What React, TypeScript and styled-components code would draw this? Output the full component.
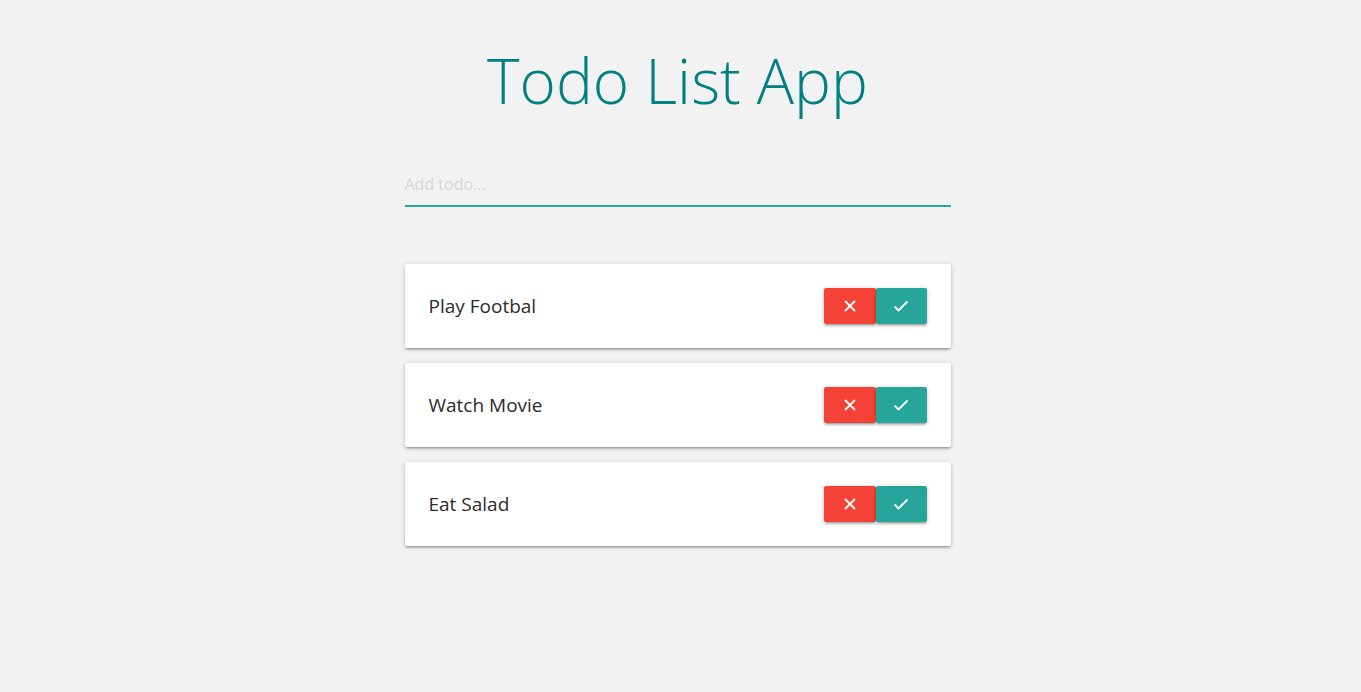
import React from 'react'
import styled, { createGlobalStyle } from 'styled-components'

const GlobalStyle = createGlobalStyle`
  body {
    margin: 0;
    min-height: 100vh;
    background: #f2f2f2;
    font-family: 'Open Sans', 'Noto Sans', sans-serif;
  }
`

const Shell = styled.div`
  padding: 38px 6px 60px 0;
`
const Page = styled.main`
  width: 546px;
  margin: 0 auto;
  display: flex;
  flex-direction: column;
`
const Title = styled.h1`
  margin: 0;
  text-align: center;
  font-weight: 300;
  font-size: 62px;
  line-height: 84px;
  color: #008080;
`
const Field = styled.div`
  margin-top: 48px;
  margin-bottom: 57px;
`
const Input = styled.input`
  width: 100%;
  box-sizing: border-box;
  height: 37px;
  background: transparent;
  border: none;
  border-bottom: 2px solid #26a69a;
  outline: none;
  padding: 0 0 7px 0;
  font-family: inherit;
  font-size: 16px;
  color: #333;
  caret-color: #000;
  &::placeholder {
    color: #d6d6d6;
  }
`
const List = styled.ul`
  list-style: none;
  margin: 0;
  padding: 0;
  display: flex;
  flex-direction: column;
  gap: 15px;
`
const Card = styled.li`
  height: 84px;
  box-sizing: border-box;
  padding: 0 24px;
  background: #fff;
  border-radius: 2px;
  box-shadow: 0 2px 2px 0 rgba(0, 0, 0, 0.14), 0 3px 1px -2px rgba(0, 0, 0, 0.12),
    0 1px 5px 0 rgba(0, 0, 0, 0.2);
  display: flex;
  align-items: center;
  justify-content: space-between;
`
const Label = styled.span`
  font-size: 19px;
  color: #2b2b2b;
`
const Actions = styled.div`
  display: flex;
`
const Btn = styled.button<{ $tone: string; $w: number }>`
  width: ${(p) => p.$w}px;
  height: 36px;
  border: none;
  border-radius: 2px;
  background: ${(p) => p.$tone};
  color: #fff;
  cursor: pointer;
  display: flex;
  align-items: center;
  justify-content: center;
  padding: 0;
  box-shadow: 0 2px 2px 0 rgba(0, 0, 0, 0.14), 0 3px 1px -2px rgba(0, 0, 0, 0.12),
    0 1px 5px 0 rgba(0, 0, 0, 0.2);
`

const todos = ['Play Footbal', 'Watch Movie', 'Eat Salad']

export default function App() {
  return (
    <>
      <GlobalStyle />
      <Shell>
        <Page>
          <Title>Todo List App</Title>
          <Field>
            <Input type='text' placeholder='Add todo...' autoFocus />
          </Field>
          <List>
            {todos.map((t) => (
              <Card key={t}>
                <Label>{t}</Label>
                <Actions>
                  <Btn $tone='#f44336' $w={52} aria-label='delete'>
                    <svg width='14' height='14' viewBox='0 0 14 14'>
                      <path d='M2 2 L12 12 M12 2 L2 12' stroke='#fff' strokeWidth='1.8' />
                    </svg>
                  </Btn>
                  <Btn $tone='#26a69a' $w={51} aria-label='done'>
                    <svg width='16' height='14' viewBox='0 0 16 14'>
                      <path d='M1.5 7.5 L5.5 11.5 L14.5 2.5' stroke='#fff' strokeWidth='1.8' fill='none' />
                    </svg>
                  </Btn>
                </Actions>
              </Card>
            ))}
          </List>
        </Page>
      </Shell>
    </>
  )
}
